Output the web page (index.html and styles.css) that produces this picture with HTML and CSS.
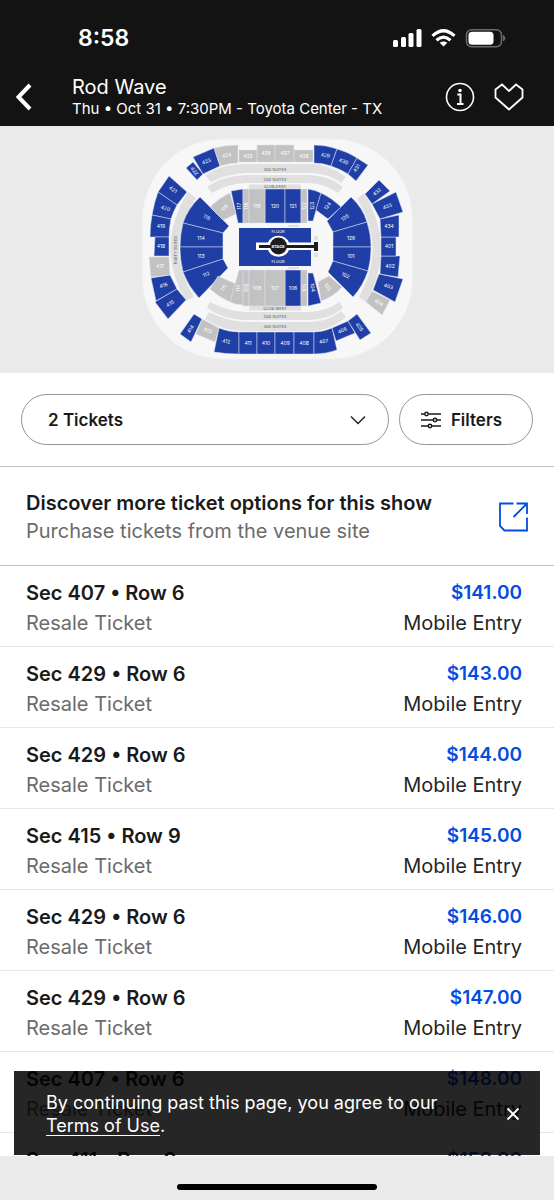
FILE: index.html
```html
<!DOCTYPE html>
<html lang="en">
<head>
  <meta charset="UTF-8">
  <meta name="viewport" content="width=device-width, initial-scale=1.0">
  <title>Rod Wave - Tickets</title>
  <link rel="stylesheet" href="styles.css">
</head>
<body>

  <header class="top">
    <div class="status-bar">
      <span class="time">8:58</span>
      <svg class="status-icons" width="114" height="22" viewBox="392 26 114 22" aria-hidden="true">
        <g fill="#fff">
          <rect x="393" y="39" width="5" height="7" rx="1.5"/>
          <rect x="401" y="36" width="5" height="10" rx="1.5"/>
          <rect x="408.500" y="32" width="5" height="14" rx="1.500"/>
          <rect x="416.500" y="28" width="5" height="18" rx="1.500"/>
          <path d="M443.500 45.500l-3.800-3.700q3.800-2.600 7.600 0z"/>
        </g>
        <g fill="none" stroke="#fff" stroke-width="3.200">
          <path d="M432.500 34.800q11-10.200 22 0"/>
          <path d="M436.500 39.200q7-6.200 14 0"/>
        </g>
        <rect x="466.500" y="28.700" width="35" height="17" rx="5" fill="none" stroke="#6b6b6b" stroke-width="1.500"/>
        <rect x="468.500" y="30.700" width="25" height="13" rx="3.500" fill="#fff"/>
        <path d="M503.500 34.500q3 2.700 0 5.500z" fill="#6b6b6b" stroke="#6b6b6b"/>
      </svg>
    </div>
    <div class="event-bar">
      <button class="icon-btn back" aria-label="Back">
        <svg width="18" height="28" viewBox="0 0 18 28"><path d="M15 2L3.500 14 15 26" fill="none" stroke="#fff" stroke-width="4"/></svg>
      </button>
      <div class="event-info">
        <h1>Rod Wave</h1>
        <p>Thu • Oct 31 • 7:30PM - Toyota Center - TX</p>
      </div>
      <button class="icon-btn" aria-label="Event info">
        <svg width="30" height="30" viewBox="0 0 30 30"><circle cx="15" cy="15" r="13.500" fill="none" stroke="#fff" stroke-width="1.600"/><circle cx="15" cy="8.500" r="1.800" fill="#fff"/><path d="M12.300 12.500H15.500V22M12 22H18.500" fill="none" stroke="#fff" stroke-width="2"/></svg>
      </button>
      <button class="icon-btn" aria-label="Favorite">
        <svg width="30" height="30" viewBox="0 0 30 30"><path d="M15 27.500L1.500 15.500V7.500L8 2.500 15 9 22 2.500 28.500 7.500V15.500Z" fill="none" stroke="#fff" stroke-width="1.800"/></svg>
      </button>
    </div>
  </header>

  <section class="map">
    <svg class="seat-map" viewBox="0 126 554 247" role="img" aria-label="Toyota Center seat map">
      <rect class="arena" x="142.500" y="139" width="270" height="220" rx="80"/>

      <!-- suites -->
      <g class="suite">
        <path d="M205 175Q222 164 245 164H310Q330 164 346 177L341 183Q328 173 310 173H245Q227 174 211 182Z"/>
        <path d="M207 187Q222 176 245 175H310Q330 176 343 187L338 193Q326 184 310 183H245Q227 184 212 193Z"/>
        <path d="M205 319Q222 331 245 331H310Q330 331 346 317L341 311Q328 322 310 322H245Q227 321 209 312Z"/>
        <path d="M207 308Q222 319 245 320H310Q330 319 343 308L340 302Q326 311 310 312H245Q227 311 210 302Z"/>
        <rect x="249" y="184.500" width="52" height="4.500"/>
        <rect x="249" y="306" width="52" height="4.500"/>
        <path d="M188 192L196 198Q163 247 194 297L186 301Q154 247 188 192Z"/>
        <path d="M364 193L357 199Q387 247 359 297L366 302Q397 247 364 193Z"/>
      </g>

      <!-- sections with tickets -->
      <g class="open">
        <path d="M186 168L193 162 203 174 197 180Z"/>
        <path d="M193 157L214 148 220 166 203 174Z"/>
        <path d="M314 145Q326 145 337 149L331 166Q323 163 314 163Z"/>
        <path d="M337 149Q348 152 357 158L348 174Q340 169 331 166Z"/>
        <path d="M357 158L368 165 356 181 348 174Z"/>
        <path d="M169 176L187 192 177 205 158 192Z"/>
        <path d="M158 192L177 205Q173 212 171 219L152 215Q154 203 158 192Z"/>
        <path d="M152 215L171 219Q169 228 169 237H150Q150 226 152 215Z"/>
        <path d="M155 237H169V256H154Z"/>
        <path d="M151 278L170 275 177 289 156 301Z"/>
        <path d="M155 302L177 289 186 300 168 319Z"/>
        <path d="M194 314L202 319 191 342 180 334Z"/>
        <path d="M219 328Q229 332 239 332V354Q226 354 214 352Z"/>
        <path d="M239 332H257V354H239Z"/>
        <path d="M257 332H275V354H257Z"/>
        <path d="M275 332H294V354H275Z"/>
        <path d="M294 332H314V354H294Z"/>
        <path d="M314 332Q323 332 332 328L337 350Q326 354 314 354Z"/>
        <path d="M332 328L348 321 355 333 336 341Z"/>
        <path d="M348 321L357 314 371 333 360 340Z"/>
        <path d="M379 274L403 279 395 302 373 290Z"/>
        <path d="M381 256H400L398 277 380 274Z"/>
        <path d="M381 237H396V256H381Z"/>
        <path d="M380 219L399 215V237H381Z"/>
        <path d="M372 204L396 192 403 212 380 219Z"/>
        <path d="M379 180L390 191 372 204 365 194Z"/>
        <path d="M200 197L229 226 223 233 183 223Q188 208 200 197Z"/>
        <path d="M183 223L223 233V247H180Q180 235 183 223Z"/>
        <path d="M180 247H223V259L183 272Q180 260 180 247Z"/>
        <path d="M183 272L223 259 228 268 199 298Q188 286 183 272Z"/>
        <path d="M351 197Q363 208 367 222L333 232 327 221Z"/>
        <path d="M367 222Q371 234 371 247H333V232Z"/>
        <path d="M333 247H371Q371 260 368 271L333 261Z"/>
        <path d="M333 261L368 271Q363 286 353 297L328 272Z"/>
        <path d="M231 191L243 189V223H238Z"/>
        <path d="M265 189H285V223H265Z"/>
        <path d="M285 189H301V223H285Z"/>
        <path d="M308 189Q315 190 321 193L313 221H308Z"/>
        <path d="M321 193Q332 198 341 207L328 219 316 210Z"/>
        <path d="M285 270H301V306H285Z"/>
        <path d="M308 273H313L321 303 308 306Z"/>
      </g>

      <!-- sold out sections -->
      <g class="sold">
        <path d="M214 148Q226 145 238 145V163Q229 163 220 166Z"/>
        <path d="M239 150H257V162H239Z"/>
        <path d="M257 145H275V162H257Z"/>
        <path d="M275 145H294V162H275Z"/>
        <path d="M294 150H313V162H294Z"/>
        <path d="M149 257H169L170 275 151 277Z"/>
        <path d="M202 319L219 328 215 342 196 334Z"/>
        <path d="M372 291L390 300 382 315 366 302Z"/>
        <path d="M210 207Q219 198 230 193L236 214 223 220Z"/>
        <path d="M243 189H249V223H243Z"/>
        <path d="M249 189H265V223H249Z"/>
        <path d="M301 189H307V223H301Z"/>
        <path d="M210 289L218 276 236 284 230 302Q219 297 210 289Z"/>
        <path d="M230 302L239 270H243V305Q236 305 230 302Z"/>
        <path d="M243 270H249V306H243Z"/>
        <path d="M249 270H265V306H249Z"/>
        <path d="M265 270H285V306H265Z"/>
        <path d="M301 270H307V306H301Z"/>
        <path d="M318 282L329 276 342 287Q333 297 321 301Z"/>
      </g>

      <!-- floor and stage -->
      <rect class="floor" x="239" y="228" width="72" height="38"/>
      <path class="stage-gap" d="M256 242.500H268A11.500 11.500 0 0 1 289 242.500H311V250H289A11.500 11.500 0 0 1 268 250H256Z"/>
      <path class="stage" d="M259 245H314V242H318V251H314V248H259Z"/>
      <circle class="stage" cx="278.500" cy="246" r="8.500"/>
      <path class="suite" d="M288 225H299V227H288ZM288 267H299V269H288ZM314 236H318V240H314ZM314 253H318V257H314Z"/>

      <g class="names">
        <text x="278" y="233">FLOOR</text>
        <text x="278" y="263">FLOOR</text>
        <text class="stage-name" x="278" y="248">STAGE</text>
      </g>
      <g class="names dark">
        <text x="275" y="170.500">300 SUITES</text>
        <text x="275" y="180.500">200 SUITES</text>
        <text x="275" y="188">CLUB EAST</text>
        <text x="275" y="310">CLUB WEST</text>
        <text x="275" y="318">200 SUITES</text>
        <text x="275" y="328">300 SUITES</text>
        <text transform="translate(177 250) rotate(-90)">PARTY SUITES</text>
      </g>

      <g class="nums">
        <text transform="translate(193 172) rotate(55)">422</text>
        <text transform="translate(207 163) rotate(-22)">423</text>
        <text transform="translate(227 157) rotate(-12)">424</text>
        <text x="248" y="158">425</text>
        <text x="266" y="155">426</text>
        <text x="285" y="155">427</text>
        <text x="304" y="158">428</text>
        <text transform="translate(325 157) rotate(10)">429</text>
        <text transform="translate(343 163) rotate(22)">430</text>
        <text transform="translate(358 169) rotate(-58)">431</text>
        <text transform="translate(172 191) rotate(35)">421</text>
        <text transform="translate(165 210) rotate(18)">420</text>
        <text x="161" y="228">419</text>
        <text x="161" y="248">418</text>
        <text x="160" y="268">417</text>
        <text transform="translate(164 287) rotate(-16)">416</text>
        <text transform="translate(171 305) rotate(-32)">415</text>
        <text transform="translate(192 330) rotate(-58)">414</text>
        <text transform="translate(207 332) rotate(22)">413</text>
        <text transform="translate(226 343) rotate(8)">412</text>
        <text x="248" y="345">411</text>
        <text x="266" y="345">410</text>
        <text x="285" y="345">409</text>
        <text x="304" y="345">408</text>
        <text transform="translate(324 343) rotate(-10)">407</text>
        <text transform="translate(343 332) rotate(-24)">406</text>
        <text transform="translate(358 328) rotate(55)">405</text>
        <text transform="translate(378 304) rotate(32)">404</text>
        <text transform="translate(388 288) rotate(18)">403</text>
        <text x="390" y="268">402</text>
        <text x="389" y="248">401</text>
        <text x="389" y="228">434</text>
        <text transform="translate(388 208) rotate(-20)">433</text>
        <text transform="translate(378 193) rotate(-40)">432</text>
        <text transform="translate(206 219) rotate(28)">115</text>
        <text x="201" y="240">114</text>
        <text x="201" y="258">113</text>
        <text transform="translate(207 276) rotate(-25)">112</text>
        <text transform="translate(346 219) rotate(-32)">125</text>
        <text x="351" y="240">126</text>
        <text x="351" y="258">101</text>
        <text transform="translate(345 277) rotate(22)">102</text>
        <text transform="translate(226 209) rotate(-55)">116</text>
        <text transform="translate(241 206) rotate(-90)">117</text>
        <text transform="translate(248 206) rotate(-90)">118</text>
        <text x="257" y="208">119</text>
        <text x="275" y="208">120</text>
        <text x="293" y="208">121</text>
        <text transform="translate(306 206) rotate(-90)">122</text>
        <text transform="translate(314 206) rotate(-90)">123</text>
        <text transform="translate(329 207) rotate(-55)">124</text>
        <text transform="translate(225 289) rotate(-55)">111</text>
        <text transform="translate(240 288) rotate(-90)">110</text>
        <text transform="translate(248 288) rotate(-90)">109</text>
        <text x="257" y="290">108</text>
        <text x="275" y="290">107</text>
        <text x="293" y="290">106</text>
        <text transform="translate(306 288) rotate(-90)">105</text>
        <text transform="translate(311 288) rotate(80)">104</text>
        <text transform="translate(326 288) rotate(55)">103</text>
      </g>
    </svg>
  </section>

  <div class="controls">
    <div class="select-wrap">
      <select class="pill" aria-label="Number of tickets">
        <option>1 Ticket</option>
        <option selected>2 Tickets</option>
        <option>3 Tickets</option>
        <option>4 Tickets</option>
      </select>
      <svg class="chevron" width="16" height="10" viewBox="0 0 16 10"><path d="M1 1.500L8 8.500 15 1.500" fill="none" stroke="#222" stroke-width="1.500"/></svg>
    </div>
    <button class="pill filters">
      <svg width="20" height="18" viewBox="0 0 20 18"><g fill="none" stroke="#1a1a1a" stroke-width="1.500"><path d="M0 3H3.500M7.500 3H20M0 9H12M16 9H20M0 15H7M11 15H20"/><circle cx="5.500" cy="3" r="1.700"/><circle cx="14" cy="9" r="1.700"/><circle cx="9" cy="15" r="1.700"/></g></svg>
      Filters
    </button>
  </div>

  <a class="venue-link" href="#">
    <div>
      <h2>Discover more ticket options for this show</h2>
      <p>Purchase tickets from the venue site</p>
    </div>
    <svg width="30" height="30" viewBox="0 0 30 30"><path d="M15.500 1.500H2V24L6.500 28.500H29V15.500M18.500 1.500H29V12M29 1.500L15.500 15" fill="none" stroke="#024ddf" stroke-width="1.800"/></svg>
  </a>

  <main class="results">
    <ul class="ticket-list">
      <li class="ticket">
        <div><h3>Sec 407 • Row 6</h3><p>Resale Ticket</p></div>
        <div class="right"><strong>$141.00</strong><p>Mobile Entry</p></div>
      </li>
      <li class="ticket">
        <div><h3>Sec 429 • Row 6</h3><p>Resale Ticket</p></div>
        <div class="right"><strong>$143.00</strong><p>Mobile Entry</p></div>
      </li>
      <li class="ticket">
        <div><h3>Sec 429 • Row 6</h3><p>Resale Ticket</p></div>
        <div class="right"><strong>$144.00</strong><p>Mobile Entry</p></div>
      </li>
      <li class="ticket">
        <div><h3>Sec 415 • Row 9</h3><p>Resale Ticket</p></div>
        <div class="right"><strong>$145.00</strong><p>Mobile Entry</p></div>
      </li>
      <li class="ticket">
        <div><h3>Sec 429 • Row 6</h3><p>Resale Ticket</p></div>
        <div class="right"><strong>$146.00</strong><p>Mobile Entry</p></div>
      </li>
      <li class="ticket">
        <div><h3>Sec 429 • Row 6</h3><p>Resale Ticket</p></div>
        <div class="right"><strong>$147.00</strong><p>Mobile Entry</p></div>
      </li>
      <li class="ticket">
        <div><h3>Sec 407 • Row 6</h3><p>Resale Ticket</p></div>
        <div class="right"><strong>$148.00</strong><p>Mobile Entry</p></div>
      </li>
      <li class="ticket">
        <div><h3>Sec 411 • Row 9</h3><p>Resale Ticket</p></div>
        <div class="right"><strong>$150.00</strong><p>Mobile Entry</p></div>
      </li>
    </ul>

    <div class="notice">
      <p>By continuing past this page, you agree to our <a href="#">Terms of Use</a>.</p>
      <button class="icon-btn" aria-label="Close">
        <svg width="14" height="14" viewBox="0 0 14 14"><path d="M1.500 1.500L12.500 12.500M12.500 1.500L1.500 12.500" stroke="#fff" stroke-width="1.800"/></svg>
      </button>
    </div>
  </main>

  <footer class="home-bar"><span></span></footer>

</body>
</html>
```

FILE: styles.css
```css
* {
  box-sizing: border-box;
}
body {
  margin: 0;
  height: 100vh;
  display: flex;
  flex-direction: column;
  background: #fff;
  color: #1a1a1a;
  font-family: Inter, "Liberation Sans", sans-serif;
  font-size: 20px;
}
h1, h2, h3, p {
  margin: 0;
}
button {
  font-family: inherit;
  cursor: pointer;
}
.icon-btn {
  display: flex;
  padding: 0;
  border: 0;
  background: none;
}

/* header */
.top {
  background: #131313;
  color: #fff;
}
.status-bar {
  display: flex;
  justify-content: space-between;
  align-items: center;
  height: 70px;
  padding: 6px 48px 0 78px;
}
.time {
  font-size: 23px;
  font-weight: 600;
}
.event-bar {
  display: flex;
  align-items: center;
  gap: 19px;
  height: 56px;
  padding: 0 30px 2px 15px;
}
.back {
  margin-right: 20px;
}
.event-info {
  flex: 1;
}
.event-info h1 {
  font-size: 20px;
  line-height: 24px;
  font-weight: 400;
}
.event-info p {
  font-size: 15px;
  line-height: 20px;
}

/* seat map */
.map {
  background: #eaeaea;
}
.seat-map {
  display: block;
  width: 100%;
}
.arena {
  fill: #f7f7f7;
  stroke: #f0f0f0;
}
.suite {
  fill: #e0e0e0;
}
.open, .floor {
  fill: #1f3fa6;
}
.sold {
  fill: #c2c2c2;
}
.open path, .sold path {
  stroke: #dfe3f0;
  stroke-width: 0.5;
}
.stage-gap {
  fill: #fff;
}
.stage {
  fill: #1d1d1d;
}
.names, .nums {
  fill: #fff;
  font-size: 5px;
  text-anchor: middle;
}
.names {
  font-size: 4px;
}
.dark {
  fill: #555;
}
.stage-name {
  font-weight: 700;
}

/* ticket count and filters */
.controls {
  display: flex;
  gap: 10px;
  padding: 21px;
  border-bottom: 1px solid #bfbfbf;
}
.select-wrap {
  position: relative;
  flex: 1;
}
.pill {
  height: 51px;
  border: 1px solid #949494;
  border-radius: 26px;
  background: #fff;
  color: #1a1a1a;
  font-family: inherit;
  font-size: 17px;
  font-weight: 600;
}
select.pill {
  width: 100%;
  padding: 0 26px;
  appearance: none;
}
.chevron {
  position: absolute;
  right: 23px;
  top: 21px;
  pointer-events: none;
}
.filters {
  display: flex;
  align-items: center;
  gap: 10px;
  padding: 0 30px 0 21px;
}

.venue-link {
  display: flex;
  justify-content: space-between;
  align-items: center;
  padding: 22px 26px 20px;
  border-bottom: 1px solid #bfbfbf;
  color: inherit;
  text-decoration: none;
}
.venue-link h2 {
  font-size: 20px;
  line-height: 28px;
  font-weight: 600;
}
.venue-link p {
  line-height: 28px;
  color: #6b6b6b;
}

/* tickets */
.results {
  position: relative;
  flex: 1;
  min-height: 0;
  overflow: hidden;
}
.ticket-list {
  margin: 0;
  padding: 0;
  list-style: none;
}
.ticket {
  display: flex;
  justify-content: space-between;
  padding: 12px 32px 8px 26px;
  border-bottom: 1px solid #e6e6e6;
}
.ticket h3, .ticket strong {
  display: block;
  font-size: 20px;
  line-height: 30px;
  font-weight: 600;
}
.ticket p {
  line-height: 30px;
  color: #6b6b6b;
}
.ticket .right {
  text-align: right;
}
.ticket .right p {
  color: #262626;
}
.ticket strong {
  font-size: 19px;
  color: #024ddf;
}

.notice {
  position: absolute;
  left: 14px;
  right: 14px;
  bottom: 1px;
  display: flex;
  justify-content: space-between;
  align-items: center;
  gap: 50px;
  padding: 20px 20px 18px 32px;
  background: rgba(0, 0, 0, 0.85);
  color: #fff;
}
.notice p {
  font-size: 18px;
  line-height: 23px;
}
.notice a {
  color: #fff;
  text-underline-offset: 3px;
}

.home-bar {
  display: flex;
  justify-content: center;
  align-items: flex-end;
  height: 44px;
  padding-bottom: 10px;
  background: #eaeaea;
}
.home-bar span {
  width: 36%;
  height: 6px;
  border-radius: 3px;
  background: #000;
}
```
